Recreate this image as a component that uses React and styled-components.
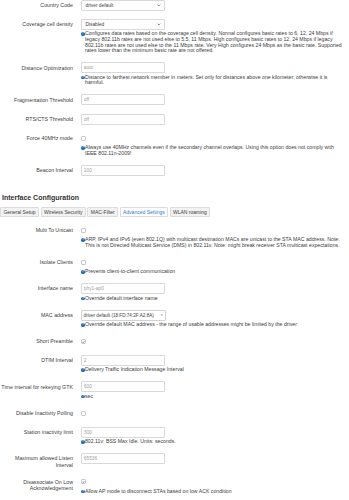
import React from "react";
import styled, { createGlobalStyle } from "styled-components";

const GlobalStyle = createGlobalStyle`
  html, body {
    margin: 0;
    padding: 0;
    background: #fff;
  }
  body {
    font-family: "Liberation Sans", Arial, sans-serif;
    color: #404040;
    overflow: hidden;
  }
`;

const deviceRows = [
  { label: ["Country Code"], type: "select", value: "driver default" },
  {
    label: ["Coverage cell density"],
    type: "select",
    value: "Disabled",
    help: [
      "Configures data rates based on the coverage cell density. Normal configures basic rates to 6, 12, 24 Mbps if",
      "legacy 802.11b rates are not used else to 5.5, 11 Mbps. High configures basic rates to 12, 24 Mbps if legacy",
      "802.11b rates are not used else to the 11 Mbps rate. Very High configures 24 Mbps as the basic rate. Supported",
      "rates lower than the minimum basic rate are not offered.",
    ],
  },
  {
    label: ["Distance Optimization"],
    type: "input",
    value: "auto",
    help: [
      "Distance to farthest network member in meters. Set only for distances above one kilometer; otherwise it is",
      "harmful.",
    ],
  },
  { label: ["Fragmentation Threshold"], type: "input", value: "off" },
  { label: ["RTS/CTS Threshold"], type: "input", value: "off" },
  {
    label: ["Force 40MHz mode"],
    type: "check",
    help: [
      "Always use 40MHz channels even if the secondary channel overlaps. Using this option does not comply with",
      "IEEE 802.11n-2009!",
    ],
  },
  { label: ["Beacon Interval"], type: "input", value: "100" },
];

const ifaceRows = [
  {
    label: ["Multi To Unicast"],
    type: "check",
    help: [
      "ARP, IPv4 and IPv6 (even 802.1Q) with multicast destination MACs are unicast to the STA MAC address. Note:",
      "This is not Directed Multicast Service (DMS) in 802.11v. Note: might break receiver STA multicast expectations.",
    ],
  },
  { label: ["Isolate Clients"], type: "check", help: ["Prevents client-to-client communication"] },
  { label: ["Interface name"], type: "input", value: "phy1-ap0", help: ["Override default interface name"] },
  {
    label: ["MAC address"],
    type: "dropdown",
    value: "driver default (18:FD:74:2F:A2:8A)",
    help: ["Override default MAC address - the range of usable addresses might be limited by the driver"],
  },
  { label: ["Short Preamble"], type: "check", checked: true },
  { label: ["DTIM Interval"], type: "input", value: "2", help: ["Delivery Traffic Indication Message Interval"] },
  { label: ["Time interval for rekeying GTK"], type: "input", value: "600", help: ["sec"] },
  { label: ["Disable Inactivity Polling"], type: "check" },
  { label: ["Station inactivity limit"], type: "input", value: "300", help: ["802.11v: BSS Max Idle. Units: seconds."] },
  { label: ["Maximum allowed Listen", "Interval"], type: "input", value: "65536" },
  {
    label: ["Disassociate On Low", "Acknowledgement"],
    type: "check",
    checked: true,
    help: ["Allow AP mode to disconnect STAs based on low ACK condition"],
  },
];

const tabs = ["General Setup", "Wireless Security", "MAC-Filter", "Advanced Settings", "WLAN roaming"];

export default function App() {
  return (
    <Page>
      <GlobalStyle />
      <Form>
        {deviceRows.map((row, i) => (
          <FormRow key={i} row={row} />
        ))}
      </Form>
      <SectionTitle>Interface Configuration</SectionTitle>
      <TabMenu>
        {tabs.map((t) => (
          <Tab key={t} $active={t === "Advanced Settings"}>
            {t}
          </Tab>
        ))}
      </TabMenu>
      <Form>
        {ifaceRows.map((row, i) => (
          <FormRow key={i} row={row} />
        ))}
      </Form>
    </Page>
  );
}

function FormRow({ row }) {
  return (
    <Row>
      <Label>
        {row.label.map((l, i) => (
          <div key={i}>{l}</div>
        ))}
      </Label>
      <Field>
        <Control>
          {row.type === "input" && <TextInput readOnly defaultValue={row.value} />}
          {row.type === "select" && (
            <Select>
              <span>{row.value}</span>
              <svg width="3.6" height="2.6" viewBox="0 0 8 6">
                <polyline points="1,1.5 4,4.5 7,1.5" fill="none" stroke="#333" strokeWidth="1.5" />
              </svg>
            </Select>
          )}
          {row.type === "dropdown" && (
            <Dropdown>
              <span>{row.value}</span>
              <Caret>▾</Caret>
            </Dropdown>
          )}
          {row.type === "check" && (
            <Checkbox>
              {row.checked && (
                <svg width="3.6" height="3.6" viewBox="0 0 10 10">
                  <polyline points="1.5,5.5 4,8 8.5,2" fill="none" stroke="#333" strokeWidth="1.7" />
                </svg>
              )}
            </Checkbox>
          )}
        </Control>
        {row.help && (
          <Help>
            {row.help.map((line, i) => (
              <div key={i}>
                {i === 0 && <HelpIcon>?</HelpIcon>}
                {line}
              </div>
            ))}
          </Help>
        )}
      </Field>
    </Row>
  );
}

const Page = styled.div`
  width: 349px;
  margin-top: -0.5px;
`;

const Form = styled.div`
  display: flex;
  flex-direction: column;
`;

const Row = styled.div`
  display: grid;
  grid-template-columns: 73px 1fr;
  column-gap: 8px;
  margin-bottom: 8.2px;
`;

const Label = styled.div`
  text-align: right;
  white-space: nowrap;
  font-size: 5.3px;
  line-height: 6.5px;
  padding-top: 2.25px;
  color: #404040;
`;

const Field = styled.div`
  display: flex;
  flex-direction: column;
  align-items: flex-start;
  min-width: 0;
`;

const Control = styled.div`
  height: 11px;
  display: flex;
  align-items: center;
`;

const TextInput = styled.input`
  box-sizing: border-box;
  width: 84px;
  height: 11px;
  margin: 0;
  padding: 0 1.8px;
  border: 1px solid #d9d9d9;
  border-radius: 1px;
  background: #fff;
  font-family: "Liberation Sans", Arial, sans-serif;
  font-size: 4.8px;
  color: #9d9d9d;
  outline: none;
`;

const Select = styled.div`
  box-sizing: border-box;
  width: 84px;
  height: 11px;
  padding: 0 3.2px 0 3.5px;
  border: 1px solid #d9d9d9;
  border-radius: 1px;
  display: flex;
  align-items: center;
  justify-content: space-between;
  font-size: 4.8px;
  color: #404040;
`;

const Dropdown = styled(Select)`
  width: 85px;
  padding: 0 1.8px 0 1.6px;
  border-color: #d2d2d2;
  font-size: 4.6px;
`;

const Caret = styled.span`
  font-size: 3.4px;
  color: #666;
`;

const Checkbox = styled.span`
  box-sizing: border-box;
  width: 5px;
  height: 5px;
  border: 1px solid #c8c8c8;
  border-radius: 1px;
  display: flex;
  align-items: center;
  justify-content: center;
  background: #fff;
`;

const Help = styled.div`
  margin-top: 1.3px;
  padding-left: 4px;
  font-size: 5.2px;
  line-height: 5.8px;
  white-space: nowrap;
  color: #404040;
`;

const HelpIcon = styled.span`
  display: inline-block;
  width: 3.7px;
  height: 3.7px;
  margin: 1px 0.3px 0 -4px;
  border-radius: 50%;
  background: #1c6fc4;
  color: #fff;
  font-size: 3px;
  font-weight: bold;
  line-height: 3.7px;
  text-align: center;
  vertical-align: top;
`;

const SectionTitle = styled.h3`
  margin: 9.3px 0 5px 2px;
  font-size: 7px;
  line-height: 9px;
  font-weight: bold;
  color: #333;
`;

const TabMenu = styled.div`
  display: flex;
  gap: 1.5px;
  margin-bottom: 7.5px;
`;

const Tab = styled.div`
  box-sizing: border-box;
  height: 10px;
  padding: 0 2.4px;
  border: 1px solid #dcdcdc;
  border-radius: 1px 1px 0 0;
  background: ${(p) => (p.$active ? "#fff" : "#f2f2f2")};
  color: ${(p) => (p.$active ? "#2a7bd0" : "#404040")};
  font-size: 5px;
  line-height: 8px;
  white-space: nowrap;
`;
